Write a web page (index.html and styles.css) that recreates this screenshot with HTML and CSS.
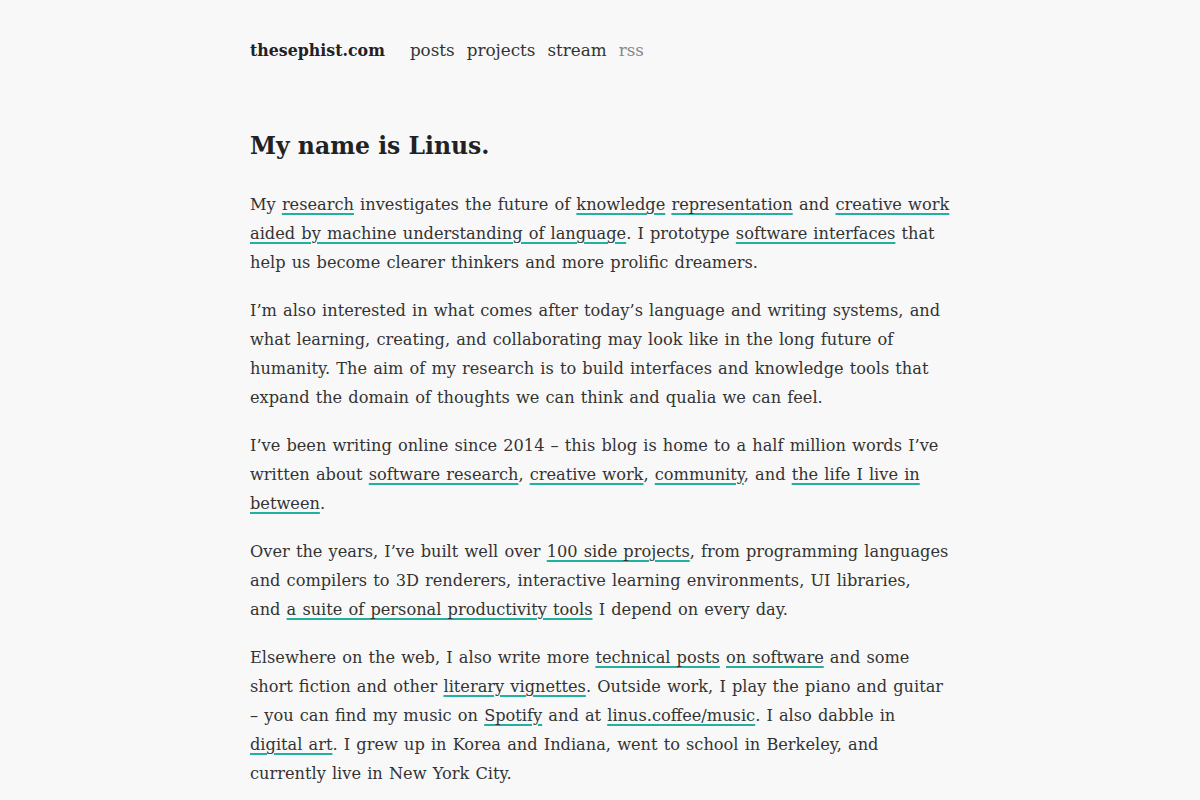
FILE: index.html
```html
<!DOCTYPE html>
<html lang="en">
<head>
  <meta charset="UTF-8">
  <meta name="viewport" content="width=device-width, initial-scale=1.0">
  <title>thesephist.com</title>
  <link rel="stylesheet" href="styles.css">
</head>
<body>
  <div class="page">
    <header class="header">
      <a class="site-name" href="#">thesephist.com</a>
      <nav class="nav">
        <a href="#">posts</a>
        <a href="#">projects</a>
        <a href="#">stream</a>
        <a class="muted" href="#">rss</a>
      </nav>
    </header>

    <main class="content">
      <h1>My name is Linus.</h1>

      <p>My <a href="#">research</a> investigates the future of <a href="#">knowledge</a> <a href="#">representation</a> and <a href="#">creative work aided by machine understanding of language</a>. I prototype <a href="#">software interfaces</a> that help us become clearer thinkers and more prolific dreamers.</p>

      <p>I&rsquo;m also interested in what comes after today&rsquo;s language and writing systems, and what learning, creating, and collaborating may look like in the long future of humanity. The aim of my research is to build interfaces and knowledge tools that expand the domain of thoughts we can think and qualia we can feel.</p>

      <p>I&rsquo;ve been writing online since 2014 &ndash; this blog is home to a half million words I&rsquo;ve written about <a href="#">software research</a>, <a href="#">creative work</a>, <a href="#">community</a>, and <a href="#">the life I live in between</a>.</p>

      <p>Over the years, I&rsquo;ve built well over <a href="#">100 side projects</a>, from programming languages and compilers to 3D renderers, interactive learning environments, UI libraries, and&nbsp;<a href="#">a suite of personal productivity tools</a> I depend on every day.</p>

      <p>Elsewhere on the web, I also write more <a href="#">technical posts</a> <a href="#">on software</a> and some short fiction and other <a href="#">literary vignettes</a>. Outside work, I play the piano and guitar &ndash; you can find my music on <a href="#">Spotify</a> and at <a href="#">linus.coffee/music</a>. I also dabble in <a href="#">digital art</a>. I grew up in Korea and Indiana, went to school in Berkeley, and currently live in New York City.</p>
    </main>
  </div>
</body>
</html>
```

FILE: styles.css
```css
body {
  margin: 0;
  background: #f8f8f8;
  color: #333;
  font-family: "DejaVu Serif", "Liberation Serif", serif;
  font-size: 16.2px;
  line-height: 29px;
}

a {
  color: inherit;
}

.page {
  width: 701.5px;
  margin: 0 auto 0 250px;
  padding-top: 36px;
}

/* top bar: site name + nav links */
.header {
  display: flex;
  align-items: baseline;
  gap: 25px;
  height: 30px;
}
.site-name {
  font-weight: bold;
  font-size: 15.8px;
  text-decoration: none;
  color: #222;
}
.nav {
  display: flex;
  gap: 12px;
  font-size: 16.8px;
}
.nav a {
  text-decoration: none;
}
.nav .muted {
  color: #888;
}

.content {
  padding-top: 62px;
}
.content h1 {
  font-size: 23.5px;
  line-height: 36px;
  color: #222;
  margin: 0 0 26px;
}
.content p {
  margin: 0 0 19px;
  word-spacing: 1px;
}
.content p a {
  text-decoration: underline;
  text-decoration-color: #22b09f;
  text-decoration-thickness: 2px;
  text-underline-offset: 3px;
}
```
